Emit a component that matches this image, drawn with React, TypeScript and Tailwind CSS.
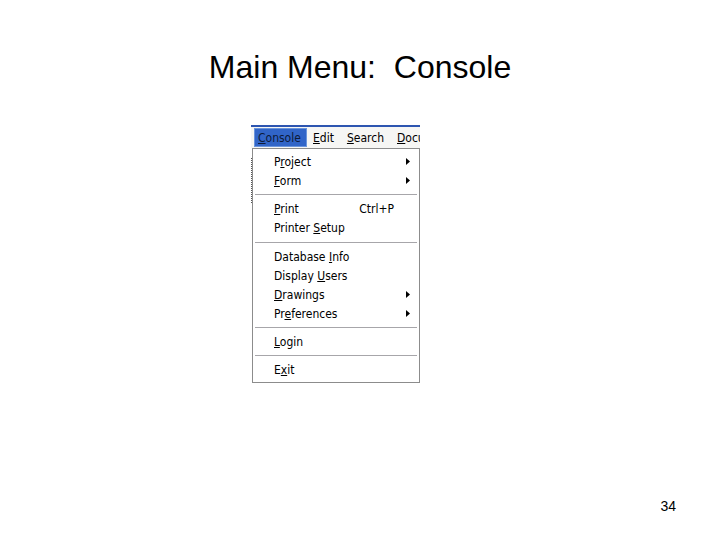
import React from "react";

const U = ({ children }: { children: React.ReactNode }) => <span className="underline underline-offset-[1px]">{children}</span>;

const Arrow = () => (
  <svg width="4" height="7" viewBox="0 0 4 7" className="block">
    <path d="M0 0 L4 3.5 L0 7 Z" fill="#000" />
  </svg>
);

type Item = { pre: string; u: string; post: string; arrow?: boolean; sc?: string };

const Row = ({ it }: { it: Item }) => (
  <div className="h-[19px] flex items-center pl-[21px] pr-[9px]">
    <span className="flex-1">
      {it.pre}
      <U>{it.u}</U>
      {it.post}
    </span>
    {it.sc && <span className="mr-[16px]">{it.sc}</span>}
    {it.arrow && <Arrow />}
  </div>
);

const Sep = ({ h }: { h: number }) => (
  <div className={h === 10 ? "h-[10px] flex items-center px-[2px]" : "h-[9px] flex items-center px-[2px]"}>
    <div className="h-px w-full bg-[#a7a6aa]" />
  </div>
);

export default function App() {
  const g1: Item[] = [
    { pre: "P", u: "r", post: "oject", arrow: true },
    { pre: "", u: "F", post: "orm", arrow: true },
  ];
  const g2: Item[] = [
    { pre: "", u: "P", post: "rint", sc: "Ctrl+P" },
    { pre: "Printer ", u: "S", post: "etup" },
  ];
  const g3: Item[] = [
    { pre: "Database ", u: "I", post: "nfo" },
    { pre: "Display ", u: "U", post: "sers" },
    { pre: "", u: "D", post: "rawings", arrow: true },
    { pre: "Pr", u: "e", post: "ferences", arrow: true },
  ];
  return (
    <div className="w-[720px] h-[540px] bg-white flex flex-col" style={{ fontFamily: "'Liberation Sans', Arial, sans-serif" }}>
      <div className="pt-[49px] text-center text-[32px] leading-[37px] text-black">Main Menu:&nbsp; Console</div>
      <div className="mt-[39px] ml-[251px] w-[169px] text-[12px] text-black" style={{ fontFamily: "'DejaVu Sans Condensed', 'Liberation Sans', sans-serif" }}>
        <div className="h-[2px] bg-[#2d55b0]" />
        <div className="h-[21px] bg-[#f6f6f4] flex items-center pl-[3px] whitespace-nowrap">
          <div className="h-[19px] w-[53px] shrink-0 bg-[#3165c8] border border-[#6b95dc] flex items-center pl-[3px] text-[#0c1a3a]"><U>C</U>onsole</div>
          <div className="ml-[6px]"><U>E</U>dit</div>
          <div className="ml-[13px]"><U>S</U>earch</div>
          <div className="ml-[13px] flex-1 overflow-hidden"><U>D</U>ocu</div>
        </div>
        <div className="flex">
          <div className="w-[1px] mt-[10px] h-[45px] border-l border-dotted border-[#555]" />
          <div className="flex-1 border border-[#8c8c8c] bg-white pt-[3px] pb-[3px]">
            {g1.map((it, i) => <Row key={i} it={it} />)}
            <Sep h={9} />
            {g2.map((it, i) => <Row key={i} it={it} />)}
            <Sep h={10} />
            {g3.map((it, i) => <Row key={i} it={it} />)}
            <Sep h={9} />
            <Row it={{ pre: "", u: "L", post: "ogin" }} />
            <Sep h={9} />
            <Row it={{ pre: "E", u: "x", post: "it" }} />
          </div>
        </div>
      </div>
      <div className="flex-1" />
      <div className="flex justify-end pr-[44px] pb-[26px] text-[14px] leading-[16px] text-black">34</div>
    </div>
  );
}
